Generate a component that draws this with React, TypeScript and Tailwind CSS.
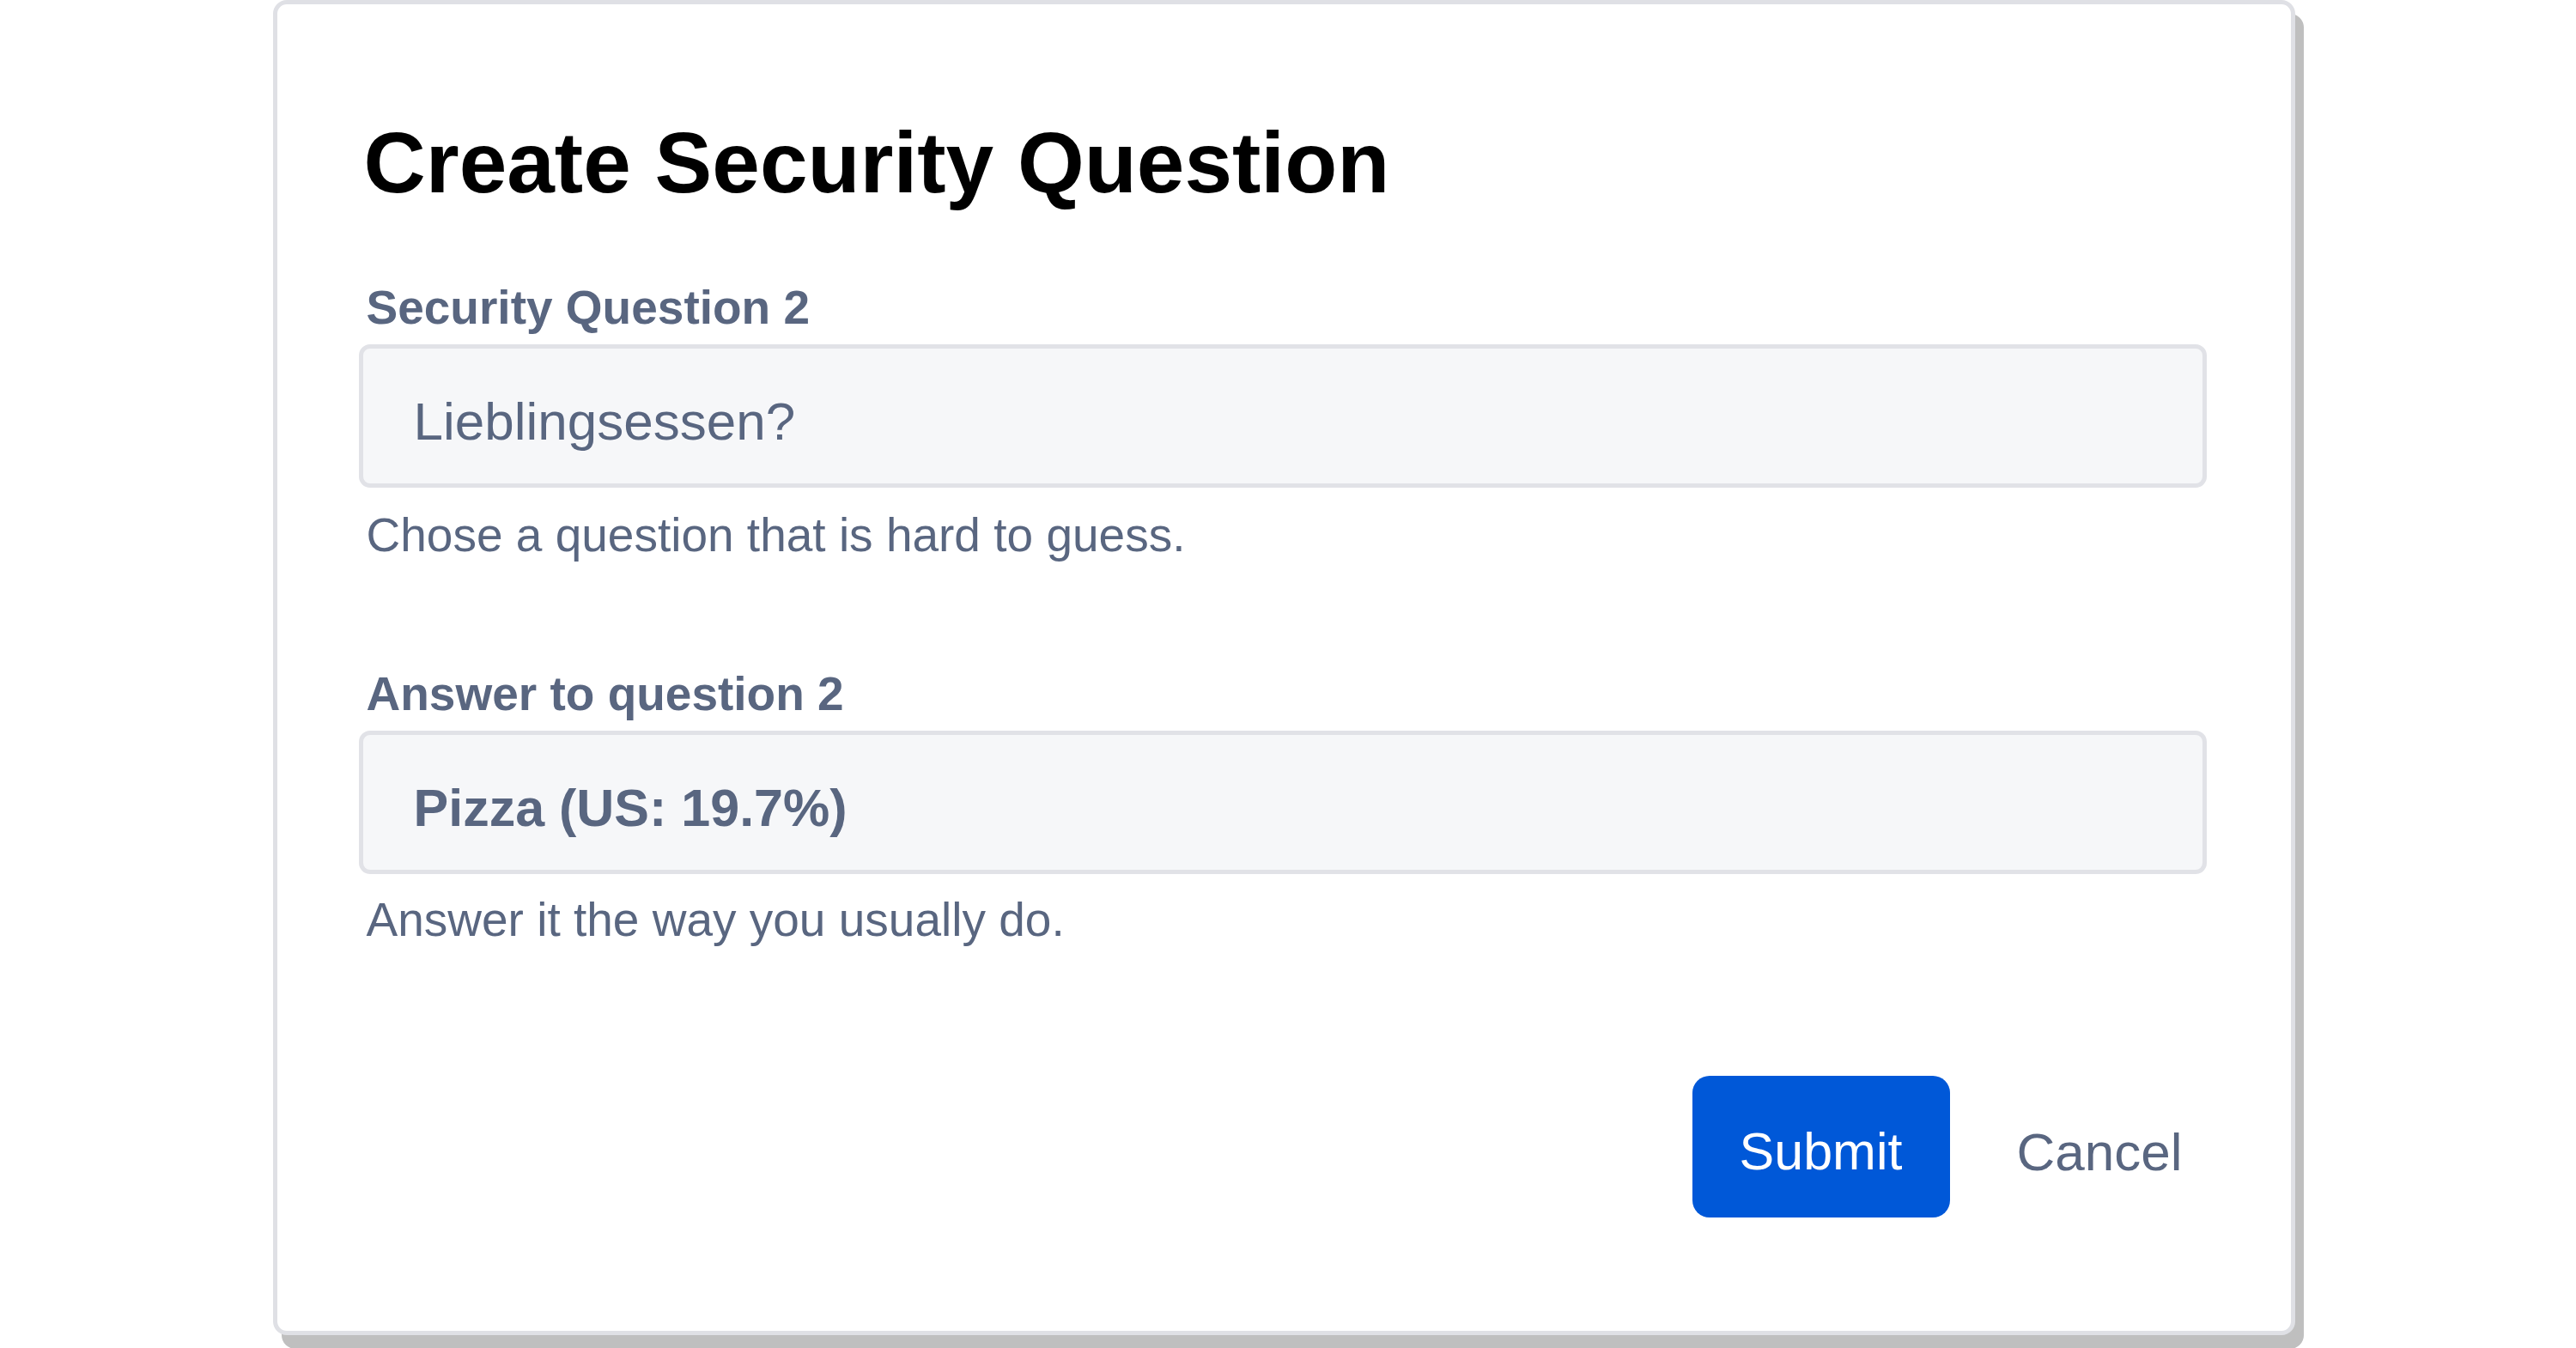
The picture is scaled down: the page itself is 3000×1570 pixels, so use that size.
import React from 'react';

const fields = [
  {
    label: 'Security Question 2',
    value: 'Lieblingsessen?',
    bold: false,
    hint: 'Chose a question that is hard to guess.',
  },
  {
    label: 'Answer to question 2',
    value: 'Pizza (US: 19.7%)',
    bold: true,
    hint: 'Answer it the way you usually do.',
  },
];

const App = () => {
  return (
    <div className="min-h-screen bg-white flex justify-center font-['Liberation_Sans',Arial,sans-serif]">
      <div className="w-[2355px] mr-[10px] h-fit bg-white border-[5px] border-[#dfe0e5] rounded-[16px] shadow-[10px_16px_0_0_#bfbfbf] pl-[95px] pr-[98px] pt-[134px] pb-[132px]">
        <h1 className="pl-[6px] text-[100px] leading-[100px] font-bold text-black">Create Security Question</h1>

        {fields.map((field, index) => (
          <div key={index} className={index === 0 ? 'mt-[91px]' : 'mt-[129px]'}>
            <label className="block pl-[9px] text-[55px] leading-[56px] font-bold text-[#596680]">
              {field.label}
            </label>
            <div className="mt-[15px] h-[167px] flex items-center pt-[13px] pl-[59px] bg-[#f6f7f9] border-[5px] border-[#e1e2e7] rounded-[13px]">
              <span
                className={
                  field.bold
                    ? 'text-[61px] leading-[62px] font-bold text-[#596680]'
                    : 'text-[62px] leading-[62px] text-[#596680]'
                }
              >
                {field.value}
              </span>
            </div>
            <p className={index === 0 ? 'mt-[27px] pl-[9px] text-[55px] leading-[56px] text-[#596680]' : 'mt-[25px] pl-[9px] text-[55px] leading-[56px] text-[#596680]'}>
              {field.hint}
            </p>
          </div>
        ))}

        {/* Actions */}
        <div className="mt-[154px] flex justify-end items-center gap-[50px]">
          <button className="w-[300px] h-[165px] flex items-center justify-center pt-[12px] bg-[#0058d8] rounded-[20px] text-white text-[61px] leading-[61px]">
            Submit
          </button>
          <button className="h-[165px] flex items-center pt-[12px] px-[28px] text-[#596680] text-[62px] leading-[62px]">
            Cancel
          </button>
        </div>
      </div>
    </div>
  );
};

export default App;
